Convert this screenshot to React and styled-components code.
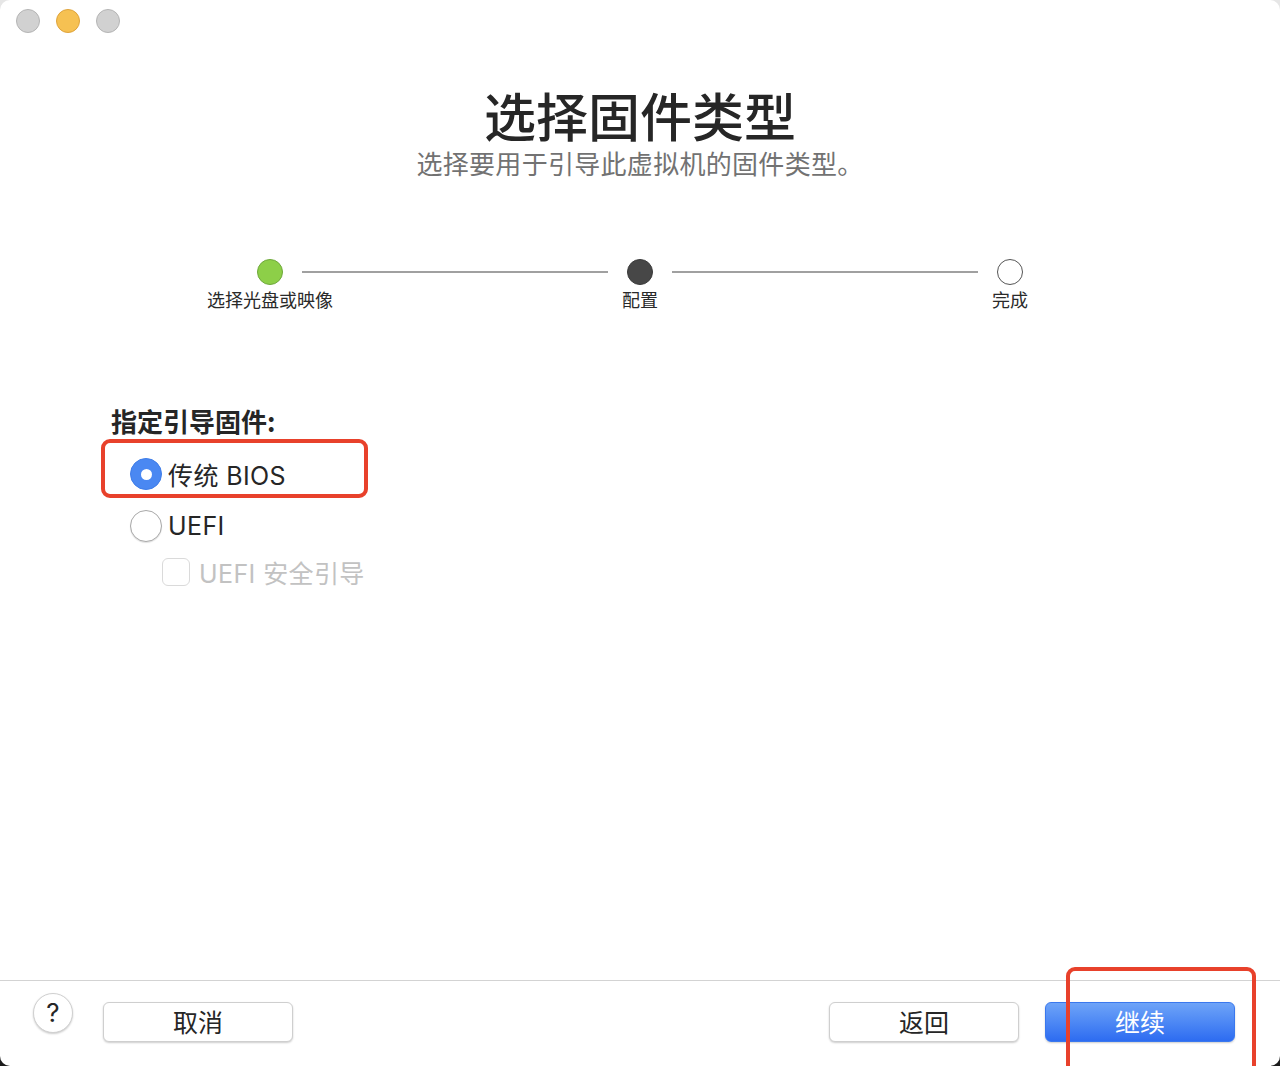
import React from "react";
import styled, { createGlobalStyle } from "styled-components";

const Global = createGlobalStyle`
  html, body { margin: 0; padding: 0; }
  body {
    background: linear-gradient(to bottom, #e6e6e6 0%, #e6e6e6 50%, #1c1c1c 50%, #1c1c1c 100%);
    font-family: "Inter", "Noto Sans CJK SC", sans-serif;
    color: #262626;
  }
`;

const Window = styled.div`
  width: 1280px;
  height: 1066px;
  background: #ffffff;
  border-radius: 10px;
  display: flex;
  flex-direction: column;
  overflow: hidden;
  position: relative;
`;

const TitleBar = styled.div`
  height: 42px;
  display: flex;
  align-items: center;
  gap: 16px;
  padding-left: 16px;
`;

const Light = styled.span`
  width: 24px;
  height: 24px;
  border-radius: 50%;
  box-sizing: border-box;
  background: ${(p) => (p.$yellow ? "#f6c152" : "#d1d1d1")};
  border: 1px solid ${(p) => (p.$yellow ? "#dea33c" : "#b4b4b4")};
`;

const Header = styled.div`
  display: flex;
  flex-direction: column;
  align-items: center;
  margin-top: 45px;
`;

const Title = styled.h1`
  margin: 0;
  font-family: "Noto Sans CJK SC", sans-serif;
  font-weight: 500;
  font-size: 52px;
  line-height: 56px;
  color: #262626;
`;

const Subtitle = styled.div`
  font-family: "Noto Sans CJK SC", sans-serif;
  font-size: 26px;
  line-height: 32px;
  letter-spacing: 0.3px;
  color: #727272;
  margin-top: 4px;
`;

const Stepper = styled.div`
  display: flex;
  align-items: flex-start;
  justify-content: center;
  margin-top: 80px;
`;

const Step = styled.div`
  width: 140px;
  display: flex;
  flex-direction: column;
  align-items: center;
  margin: 0 -38px;
`;

const Dot = styled.span`
  width: 26px;
  height: 26px;
  box-sizing: border-box;
  border-radius: 50%;
  background: ${(p) => p.$bg};
  border: 1px solid ${(p) => p.$bd};
`;

const StepLabel = styled.div`
  font-family: "Noto Sans CJK SC", sans-serif;
  font-size: 18px;
  line-height: 24px;
  margin-top: 2px;
  color: #2a2a2a;
`;

const Line = styled.div`
  width: 306px;
  height: 2px;
  background: #a0a0a0;
  margin-top: 12px;
`;

const Form = styled.div`
  display: flex;
  flex-direction: column;
  align-items: flex-start;
  padding-left: 101px;
  margin-top: 95px;
`;

const Label = styled.div`
  font-family: "Noto Sans CJK SC", sans-serif;
  font-weight: 700;
  font-size: 26px;
  line-height: 30px;
  color: #262626;
  margin-left: 10px;
`;

const Highlight = styled.div`
  box-sizing: border-box;
  width: 267px;
  height: 59px;
  border: 4px solid #e8412b;
  border-radius: 9px;
  margin-top: 3px;
  padding: 13px 0 0 25px;
`;

const Row = styled.div`
  display: flex;
  align-items: center;
  gap: ${(p) => p.$gap || 6}px;
  height: 36px;
  margin-top: ${(p) => p.$mt || 0}px;
  margin-left: ${(p) => p.$indent || 0}px;
  font-family: "Inter", "Noto Sans CJK SC", sans-serif;
  font-size: 25px;
  letter-spacing: 0.4px;
  color: ${(p) => (p.$disabled ? "#c2c2c2" : "#262626")};
`;

const Radio = styled.span`
  width: 32px;
  height: 32px;
  box-sizing: border-box;
  border-radius: 50%;
  display: flex;
  align-items: center;
  justify-content: center;
  background: ${(p) => (p.$on ? "#4a88f2" : "#ffffff")};
  border: 1px solid ${(p) => (p.$on ? "#3f7de8" : "#a9a9a9")};
  box-shadow: ${(p) => (p.$on ? "none" : "0 1px 1px rgba(0,0,0,0.12)")};
  &::after {
    content: "";
    display: ${(p) => (p.$on ? "block" : "none")};
    width: 11px;
    height: 11px;
    border-radius: 50%;
    background: #ffffff;
  }
`;

const Check = styled.span`
  width: 28px;
  height: 28px;
  box-sizing: border-box;
  border: 1px solid #dadada;
  border-radius: 6px;
  background: #ffffff;
`;

const Footer = styled.div`
  margin-top: auto;
  height: 86px;
  box-sizing: border-box;
  border-top: 1px solid #d3d3d3;
  display: flex;
  align-items: center;
  padding: 0 45px 4px 33px;
  position: relative;
`;

const Help = styled.button`
  width: 40px;
  height: 40px;
  border-radius: 50%;
  box-sizing: border-box;
  border: 1px solid #d0d0d0;
  background: #fff;
  box-shadow: 0 1px 2px rgba(0,0,0,0.2);
  font-family: "Inter", sans-serif;
  font-size: 26px;
  color: #262626;
  padding: 0;
  display: flex;
  align-items: center;
  justify-content: center;
  margin-top: -18px;
`;

const Button = styled.button`
  width: 190px;
  height: 40px;
  box-sizing: border-box;
  border-radius: 6px;
  font-family: "Noto Sans CJK SC", sans-serif;
  font-size: 25px;
  line-height: 1;
  padding: 0;
  color: ${(p) => (p.$primary ? "#ffffff" : "#262626")};
  border: 1px solid ${(p) => (p.$primary ? "#3a78ee" : "#cfcfcf")};
  background: ${(p) =>
    p.$primary ? "linear-gradient(to bottom, #6ea4f8, #2d6cf1)" : "#ffffff"};
  box-shadow: 0 1px 2px rgba(0,0,0,0.2);
  margin-left: ${(p) => p.$ml || 0}px;
`;

const Spacer = styled.div`
  flex: 1;
`;

const CornerMark = styled.div`
  position: absolute;
  left: 1066px;
  top: -14px;
  width: 190px;
  height: 120px;
  box-sizing: border-box;
  border: 4px solid #e8412b;
  border-radius: 9px;
  pointer-events: none;
`;

export default function App() {
  return (
    <>
      <Global />
      <Window>
        <TitleBar>
          <Light />
          <Light $yellow />
          <Light />
        </TitleBar>
        <Header>
          <Title>选择固件类型</Title>
          <Subtitle>选择要用于引导此虚拟机的固件类型。</Subtitle>
        </Header>
        <Stepper>
          <Step>
            <Dot $bg="#8dcf48" $bd="#6ea83a" />
            <StepLabel>选择光盘或映像</StepLabel>
          </Step>
          <Line />
          <Step>
            <Dot $bg="#474747" $bd="#3a3a3a" />
            <StepLabel>配置</StepLabel>
          </Step>
          <Line />
          <Step>
            <Dot $bg="#ffffff" $bd="#555555" />
            <StepLabel>完成</StepLabel>
          </Step>
        </Stepper>
        <Form>
          <Label>指定引导固件:</Label>
          <Highlight>
            <Row>
              <Radio $on />
              传统 BIOS
            </Row>
          </Highlight>
          <Row $indent={29} $mt={10}>
            <Radio />
            UEFI
          </Row>
          <Row $indent={61} $gap={9} $mt={10} $disabled>
            <Check />
            UEFI 安全引导
          </Row>
        </Form>
        <Footer>
          <Help>?</Help>
          <Button $ml={30}>取消</Button>
          <Spacer />
          <Button>返回</Button>
          <Button $primary $ml={26}>继续</Button>
          <CornerMark />
        </Footer>
      </Window>
    </>
  );
}
